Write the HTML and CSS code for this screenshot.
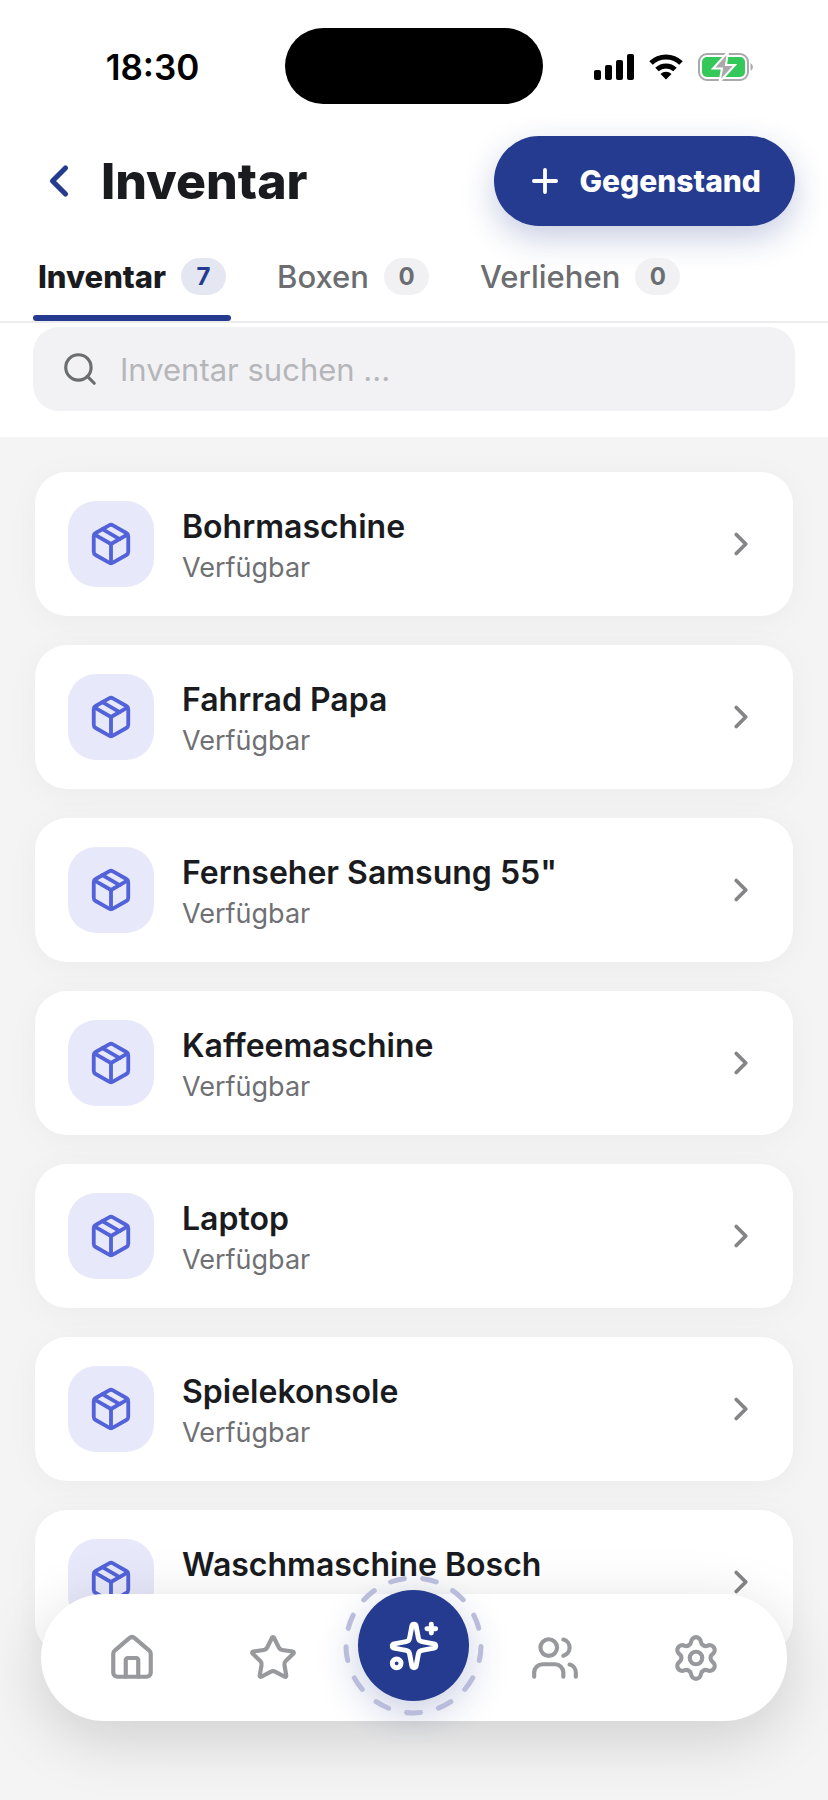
FILE: index.html
```html
<!DOCTYPE html>
<html lang="de">
<head>
  <meta charset="UTF-8">
  <title>Inventar</title>
  <meta name="viewport" content="width=device-width, initial-scale=1.0">
  <link rel="stylesheet" href="styles.css">
</head>
<body>
  <!-- shared icons -->
  <svg class="sprite" aria-hidden="true">
    <symbol id="package" viewBox="0 0 24 24">
      <path d="M11 21.73a2 2 0 0 0 2 0l7-4A2 2 0 0 0 21 16V8a2 2 0 0 0-1-1.73l-7-4a2 2 0 0 0-2 0l-7 4A2 2 0 0 0 3 8v8a2 2 0 0 0 1 1.73z"/>
      <path d="M12 22V12"/>
      <path d="M3.29 7 12 12l8.71-5"/>
      <path d="m7.5 4.27 9 5.15"/>
    </symbol>
    <symbol id="chevron" viewBox="0 0 24 24"><path d="m9 18 6-6-6-6"/></symbol>
  </svg>

  <div class="top">
    <div class="status">
      <span class="time">18:30</span>
      <span class="island"></span>
      <span class="signals">
        <svg width="40" height="26" viewBox="0 0 40 26">
          <rect x="0" y="16" width="7" height="10" rx="2"/>
          <rect x="11" y="11" width="7" height="15" rx="2"/>
          <rect x="22" y="6" width="7" height="20" rx="2"/>
          <rect x="33" y="0" width="7" height="26" rx="2"/>
        </svg>
        <svg width="34" height="26" viewBox="0 0 34 26">
          <path d="M2 9a21.5 21.5 0 0 1 30 0M8 15.5a13 13 0 0 1 18 0" fill="none" stroke="#000" stroke-width="5"/>
          <path d="M11.5 20a8 8 0 0 1 11 0L17 25.5z"/>
        </svg>
        <svg width="56" height="28" viewBox="0 0 56 28">
          <rect x="1" y="1" width="49" height="26" rx="8" fill="none" stroke="#a9a9ab" stroke-width="2"/>
          <path d="M52.5 10a4.5 4.5 0 0 1 0 8z" fill="#a9a9ab"/>
          <rect x="4" y="4" width="43" height="20" rx="5" fill="#34c759"/>
          <path d="M30-1 15 15.5h9L21.5 29 37 12h-9z" fill="#a9a9ab" stroke="#fff" stroke-width="2"/>
        </svg>
      </span>
    </div>

    <header class="header">
      <a class="back" href="#" aria-label="Zurück">
        <svg class="icon" viewBox="0 0 24 24"><path d="m15 18-6-6 6-6"/></svg>
      </a>
      <h1>Inventar</h1>
      <button class="add" type="button">
        <svg class="icon" viewBox="0 0 24 24"><path d="M5 12h14M12 5v14"/></svg>
        Gegenstand
      </button>
    </header>

    <nav class="tabs">
      <a class="tab active" href="#">Inventar <span class="count">7</span></a>
      <a class="tab" href="#">Boxen <span class="count">0</span></a>
      <a class="tab" href="#">Verliehen <span class="count">0</span></a>
    </nav>

    <label class="search">
      <svg class="icon" viewBox="0 0 24 24"><path d="m21 21-4.34-4.34"/><circle cx="11" cy="11" r="8"/></svg>
      <input type="search" placeholder="Inventar suchen ..." aria-label="Inventar suchen">
    </label>
  </div>

  <main class="list">
    <a class="card" href="#">
      <span class="tile"><svg class="icon"><use href="#package"/></svg></span>
      <span class="text"><strong>Bohrmaschine</strong><small>Verfügbar</small></span>
      <svg class="icon go"><use href="#chevron"/></svg>
    </a>
    <a class="card" href="#">
      <span class="tile"><svg class="icon"><use href="#package"/></svg></span>
      <span class="text"><strong>Fahrrad Papa</strong><small>Verfügbar</small></span>
      <svg class="icon go"><use href="#chevron"/></svg>
    </a>
    <a class="card" href="#">
      <span class="tile"><svg class="icon"><use href="#package"/></svg></span>
      <span class="text"><strong>Fernseher Samsung 55"</strong><small>Verfügbar</small></span>
      <svg class="icon go"><use href="#chevron"/></svg>
    </a>
    <a class="card" href="#">
      <span class="tile"><svg class="icon"><use href="#package"/></svg></span>
      <span class="text"><strong>Kaffeemaschine</strong><small>Verfügbar</small></span>
      <svg class="icon go"><use href="#chevron"/></svg>
    </a>
    <a class="card" href="#">
      <span class="tile"><svg class="icon"><use href="#package"/></svg></span>
      <span class="text"><strong>Laptop</strong><small>Verfügbar</small></span>
      <svg class="icon go"><use href="#chevron"/></svg>
    </a>
    <a class="card" href="#">
      <span class="tile"><svg class="icon"><use href="#package"/></svg></span>
      <span class="text"><strong>Spielekonsole</strong><small>Verfügbar</small></span>
      <svg class="icon go"><use href="#chevron"/></svg>
    </a>
    <a class="card" href="#">
      <span class="tile"><svg class="icon"><use href="#package"/></svg></span>
      <span class="text"><strong>Waschmaschine Bosch</strong><small>Verfügbar</small></span>
      <svg class="icon go"><use href="#chevron"/></svg>
    </a>
  </main>

  <nav class="dock">
    <a href="#" aria-label="Start">
      <svg class="icon" viewBox="0 0 24 24">
        <path d="M15 21v-8a1 1 0 0 0-1-1h-4a1 1 0 0 0-1 1v8"/>
        <path d="M3 10a2 2 0 0 1 .709-1.528l7-5.999a2 2 0 0 1 2.582 0l7 5.999A2 2 0 0 1 21 10v9a2 2 0 0 1-2 2H5a2 2 0 0 1-2-2z"/>
      </svg>
    </a>
    <a href="#" aria-label="Favoriten">
      <svg class="icon" viewBox="0 0 24 24">
        <path d="M11.525 2.295a.53.53 0 0 1 .95 0l2.31 4.679a2.123 2.123 0 0 0 1.595 1.16l5.166.756a.53.53 0 0 1 .294.904l-3.736 3.638a2.123 2.123 0 0 0-.611 1.878l.882 5.14a.53.53 0 0 1-.771.56l-4.618-2.428a2.122 2.122 0 0 0-1.973 0L6.396 21.01a.53.53 0 0 1-.77-.56l.881-5.139a2.122 2.122 0 0 0-.611-1.879L2.16 9.795a.53.53 0 0 1 .294-.906l5.165-.755a2.122 2.122 0 0 0 1.597-1.16z"/>
      </svg>
    </a>
    <button class="assist" type="button" aria-label="Assistent">
      <svg class="ring" viewBox="0 0 140 140"><circle cx="70" cy="70" r="67" pathLength="130" transform="rotate(84 70 70)"/></svg>
      <svg class="icon" viewBox="0 0 24 24">
        <path d="M11.017 2.814a1 1 0 0 1 1.966 0l1.051 5.558a2 2 0 0 0 1.594 1.594l5.558 1.051a1 1 0 0 1 0 1.966l-5.558 1.051a2 2 0 0 0-1.594 1.594l-1.051 5.558a1 1 0 0 1-1.966 0l-1.051-5.558a2 2 0 0 0-1.594-1.594l-5.558-1.051a1 1 0 0 1 0-1.966l5.558-1.051a2 2 0 0 0 1.594-1.594z"/>
        <path d="M20 2v4M22 4h-4"/>
        <circle cx="4" cy="20" r="2"/>
      </svg>
    </button>
    <a href="#" aria-label="Familie">
      <svg class="icon" viewBox="0 0 24 24">
        <path d="M16 21v-2a4 4 0 0 0-4-4H6a4 4 0 0 0-4 4v2"/>
        <circle cx="9" cy="7" r="4"/>
        <path d="M22 21v-2a4 4 0 0 0-3-3.87M16 3.13a4 4 0 0 1 0 7.75"/>
      </svg>
    </a>
    <a href="#" aria-label="Einstellungen">
      <svg class="icon" viewBox="0 0 24 24">
        <path d="M9.671 4.136a2.34 2.34 0 0 1 4.659 0 2.34 2.34 0 0 0 3.319 1.915 2.34 2.34 0 0 1 2.33 4.033 2.34 2.34 0 0 0 0 3.831 2.34 2.34 0 0 1-2.33 4.033 2.34 2.34 0 0 0-3.319 1.915 2.34 2.34 0 0 1-4.659 0 2.34 2.34 0 0 0-3.32-1.915 2.34 2.34 0 0 1-2.33-4.033 2.34 2.34 0 0 0 0-3.831A2.34 2.34 0 0 1 6.35 6.051a2.34 2.34 0 0 0 3.319-1.915"/>
        <circle cx="12" cy="12" r="3"/>
      </svg>
    </a>
  </nav>
</body>
</html>
```

FILE: styles.css
```css
* {
  box-sizing: border-box;
}
body {
  margin: 0;
  min-height: 100vh;
  font-family: Inter, "Liberation Sans", sans-serif;
  background: #f4f4f4;
  color: #1a1b1e;
}
a {
  color: inherit;
  text-decoration: none;
}
button {
  border: none;
  font-family: inherit;
  cursor: pointer;
}
.sprite {
  display: none;
}
.icon {
  flex: none;
  width: 38px;
  height: 38px;
  fill: none;
  stroke: currentColor;
  stroke-width: 2;
  stroke-linecap: round;
  stroke-linejoin: round;
}

.top {
  background: #fff;
  padding-bottom: 26px;
}
.status {
  display: grid;
  grid-template-columns: 1fr 258px 1fr;
  align-items: center;
  padding-top: 28px;
  color: #000;
}
.time {
  padding: 2px 0 0 20px;
  font-size: 35px;
  font-weight: 600;
  text-align: center;
}
.island {
  height: 76px;
  border-radius: 38px;
  background: #000;
}
.signals {
  display: flex;
  align-items: center;
  gap: 15px;
  padding: 2px 0 0 51px;
}

.header {
  display: flex;
  align-items: center;
  padding: 32px 33px 0;
}
.back {
  display: flex;
  color: #243b8f;
}
.back .icon {
  width: 52px;
  height: 52px;
  stroke-width: 2.4;
}
h1 {
  flex: 1;
  margin: 0 0 0 16px;
  font-size: 50px;
  font-weight: 800;
}
.add {
  display: flex;
  align-items: center;
  gap: 16px;
  height: 90px;
  padding: 0 34px 0 32px;
  border-radius: 45px;
  background: #243b8f;
  color: #fff;
  font-size: 30px;
  font-weight: 800;
  box-shadow: 0 12px 32px rgba(36, 59, 143, 0.25);
}
.add .icon {
  stroke-width: 2.4;
}

.tabs {
  display: flex;
  gap: 41px;
  padding: 0 33px;
  border-bottom: 2px solid #ebecee;
}
.tab {
  display: flex;
  align-items: center;
  gap: 15px;
  padding: 32px 5px 20px;
  border-bottom: 6px solid transparent;
  font-size: 31px;
  font-weight: 500;
  line-height: 37px;
  color: #6b6d71;
}
.tab.active {
  position: relative;
  font-weight: 800;
  color: #1a1b1e;
}
.tab.active::after {
  content: "";
  position: absolute;
  left: 0;
  right: 0;
  bottom: -6px;
  height: 6px;
  border-radius: 3px;
  background: #243b8f;
}
.count {
  min-width: 45px;
  padding: 0 14px;
  border-radius: 19px;
  background: #f1f1f3;
  color: #6b6d71;
  font-size: 24px;
  font-weight: 700;
  text-align: center;
}
.active .count {
  background: #e4e7f2;
  color: #243b8f;
}

.search {
  display: flex;
  align-items: center;
  gap: 21px;
  height: 84px;
  margin: 4px 33px 0;
  padding: 0 28px;
  border-radius: 26px;
  background: #f2f2f4;
  color: #6b6d71;
}
.search input {
  flex: 1;
  min-width: 0;
  padding: 0;
  border: none;
  outline: none;
  background: none;
  font-family: inherit;
  font-size: 31px;
  color: #1a1b1e;
}
.search input::placeholder {
  color: #b5b6b9;
}

.list {
  display: flex;
  flex-direction: column;
  gap: 29px;
  padding: 35px 35px 120px;
}
.card {
  display: flex;
  align-items: center;
  gap: 28px;
  padding: 29px 33px;
  border-radius: 32px;
  background: #fff;
  box-shadow: 0 4px 32px rgba(0, 0, 0, 0.04);
}
.tile {
  display: flex;
  align-items: center;
  justify-content: center;
  width: 86px;
  height: 86px;
  border-radius: 28px;
  background: #e8e8fb;
  color: #5262d9;
}
.tile .icon {
  width: 46px;
  height: 46px;
}
.text {
  flex: 1;
  display: flex;
  flex-direction: column;
  padding-top: 2px;
}
.text strong {
  font-size: 32px;
  font-weight: 600;
  line-height: 46px;
}
.text small {
  font-size: 27px;
  line-height: 36px;
  color: #6f7073;
}
.go {
  color: #858588;
  stroke-width: 2.4;
}

.dock {
  position: fixed;
  left: 41px;
  right: 41px;
  bottom: 79px;
  display: grid;
  grid-template-columns: repeat(5, 1fr);
  grid-template-rows: 100%;
  align-items: center;
  justify-items: center;
  height: 127px;
  padding: 0 20px;
  border-radius: 64px;
  background: #fff;
  color: #98999c;
  box-shadow: 0 16px 64px rgba(0, 0, 0, 0.16);
}
.dock a {
  display: flex;
}
.dock .icon {
  width: 50px;
  height: 50px;
}
.assist {
  position: relative;
  display: flex;
  align-items: center;
  justify-content: center;
  width: 111px;
  height: 111px;
  margin-bottom: 24px;
  padding: 0;
  border-radius: 50%;
  background: #243b8f;
  color: #fff;
  box-shadow: 0 12px 40px rgba(36, 59, 143, 0.25);
}
.dock .assist .icon {
  width: 52px;
  height: 52px;
  stroke-width: 2.3;
}
.ring {
  position: absolute;
  inset: -15px;
  fill: none;
  stroke: #b9bcdb;
  stroke-width: 5;
  stroke-linecap: round;
  stroke-dasharray: 4.3 5.7;
}
```
